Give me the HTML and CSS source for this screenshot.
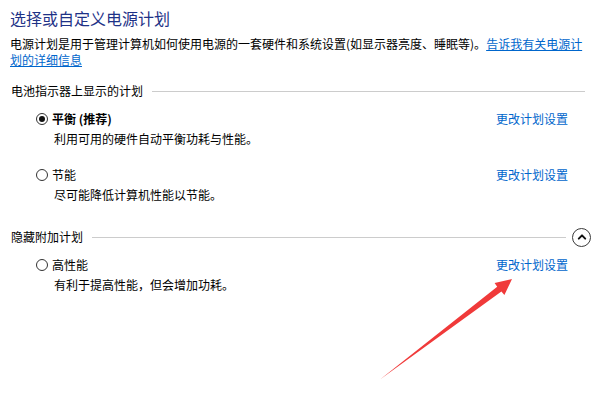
FILE: index.html
```html
<!DOCTYPE html>
<html lang="zh-CN">
<head>
<meta charset="utf-8">
<title>电源选项</title>
<link rel="stylesheet" href="styles.css">
</head>
<body>
<div class="page">
  <h1 class="title">选择或自定义电源计划</h1>
  <p class="intro">电源计划是用于管理计算机如何使用电源的一套硬件和系统设置(如显示器亮度、睡眠等)。<a href="#">告诉我有关电源计划的详细信息</a></p>

  <div class="group-head"><span class="group-label">电池指示器上显示的计划</span><span class="rule"></span></div>
  <div class="plans">
    <div class="plan first">
      <div class="plan-row">
        <label class="plan-name strong"><span class="radio checked"></span>平衡 (推荐)</label>
        <a class="change" href="#">更改计划设置</a>
      </div>
      <div class="plan-desc">利用可用的硬件自动平衡功耗与性能。</div>
    </div>
    <div class="plan">
      <div class="plan-row">
        <label class="plan-name"><span class="radio"></span>节能</label>
        <a class="change" href="#">更改计划设置</a>
      </div>
      <div class="plan-desc">尽可能降低计算机性能以节能。</div>
    </div>
  </div>

  <div class="group-head extra"><span class="group-label">隐藏附加计划</span><span class="rule"></span>
    <span class="toggle"><svg width="16" height="16" viewBox="0 0 16 16"><polyline points="4.8,9.6 8,6.4 11.2,9.6" fill="none" stroke="#111" stroke-width="2" stroke-linecap="round" stroke-linejoin="round"/></svg></span>
  </div>
  <div class="plans">
    <div class="plan first">
      <div class="plan-row">
        <label class="plan-name"><span class="radio"></span>高性能</label>
        <a class="change" href="#">更改计划设置</a>
      </div>
      <div class="plan-desc">有利于提高性能，但会增加功耗。</div>
    </div>
  </div>
</div>

<svg class="arrow" width="615" height="409" viewBox="0 0 615 409">
  <polygon points="380,379.5 497.2,286.8 494.6,283 512,279 504.4,295 501.4,291.6" fill="#f03a3a"/>
</svg>
</body>
</html>
```

FILE: styles.css
```css
html, body {
  margin: 0;
  padding: 0;
}

body {
  position: relative;
  width: 615px;
  height: 409px;
  overflow: hidden;
  background: #ffffff;
  color: #000000;
  font-family: "Noto Sans CJK SC", "Microsoft YaHei", "Noto Sans", sans-serif;
  font-size: 12px;
}

.page {
  padding: 8px 25px 0 10px;
}

.title {
  margin: 0;
  font-size: 16px;
  font-weight: normal;
  line-height: 20px;
  color: #1e3287;
}

.intro {
  margin: 8px 0 0;
  line-height: 16px;
}

.intro a {
  color: #0066cc;
  text-decoration: underline;
}

.group-head {
  display: flex;
  align-items: center;
  height: 20px;
  margin-top: 13px;
  margin-right: 5px;
  padding-left: 1px;
}

.group-head.extra {
  margin-top: 22px;
  margin-right: 0;
}

.group-label {
  line-height: 20px;
  white-space: nowrap;
}

.rule {
  flex: 1;
  height: 1px;
  margin-left: 9px;
  background: #cccccc;
}

.toggle {
  box-sizing: border-box;
  display: flex;
  align-items: center;
  justify-content: center;
  width: 19px;
  height: 19px;
  margin-left: 6px;
  margin-right: -1px;
  border: 1.3px solid #3a3a3a;
  border-radius: 50%;
}

.plans {
  padding-left: 26px;
  padding-right: 22px;
}

.plan {
  margin-top: 16px;
}

.plan.first {
  margin-top: 8px;
}

.plan-row {
  display: flex;
  align-items: center;
  justify-content: space-between;
  height: 20px;
}

.plan-name {
  display: flex;
  align-items: center;
  gap: 4px;
  line-height: 20px;
}

.plan-name.strong {
  font-weight: bold;
}

.radio {
  box-sizing: border-box;
  position: relative;
  width: 12px;
  height: 12px;
  border: 1px solid #333333;
  border-radius: 50%;
  background: #ffffff;
}

.radio.checked::after {
  content: "";
  position: absolute;
  left: 2px;
  top: 2px;
  width: 6px;
  height: 6px;
  border-radius: 50%;
  background: #111111;
}

.change {
  color: #0066cc;
  text-decoration: none;
  line-height: 20px;
}

.plan-desc {
  padding-left: 18px;
  line-height: 20px;
}

.arrow {
  position: absolute;
  left: 0;
  top: 0;
  pointer-events: none;
}
```
